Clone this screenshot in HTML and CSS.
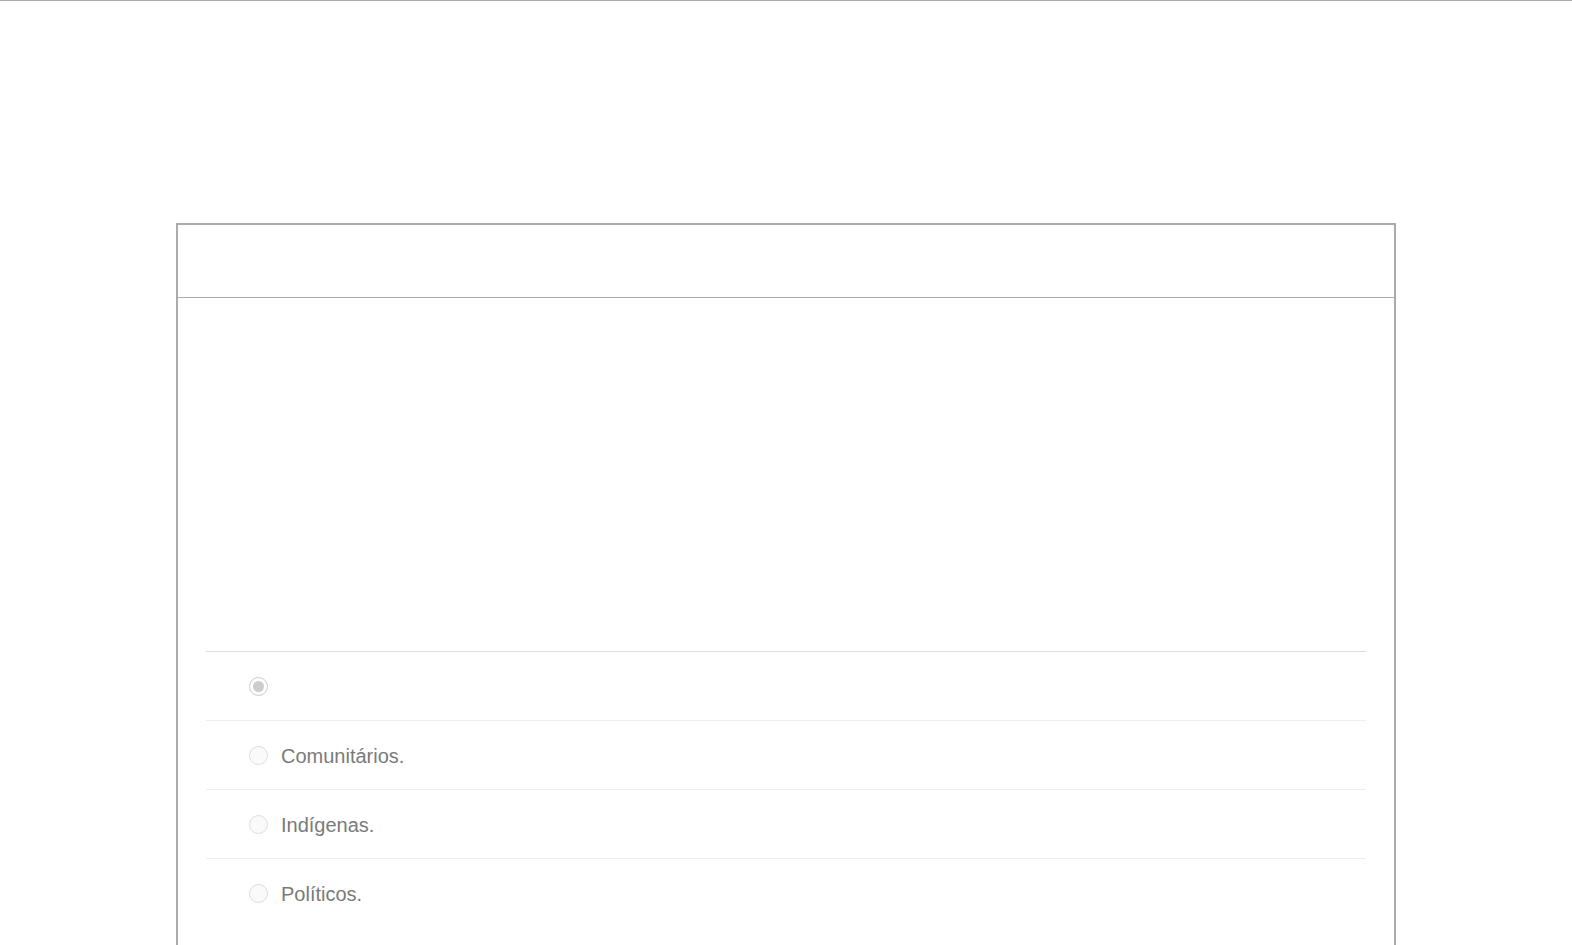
FILE: index.html
```html
<!DOCTYPE html>
<html lang="pt-br">
<head>
    <meta charset="UTF-8">
    <meta name="viewport" content="width=device-width, initial-scale=1.0">
    <title>Questão</title>
    <link rel="stylesheet" href="styles.css">
</head>
<body>
    <div class="topline"></div>

    <main class="page">
        <section class="card">
            <div class="card-header"></div>
            <div class="card-body">
                <div class="question"></div>
                <ul class="options">
                    <li class="option">
                        <input type="radio" name="resposta" class="radio" checked disabled>
                        <span class="option-text"></span>
                    </li>
                    <li class="option">
                        <input type="radio" name="resposta" class="radio" disabled>
                        <span class="option-text">Comunitários.</span>
                    </li>
                    <li class="option">
                        <input type="radio" name="resposta" class="radio" disabled>
                        <span class="option-text">Indígenas.</span>
                    </li>
                    <li class="option">
                        <input type="radio" name="resposta" class="radio" disabled>
                        <span class="option-text">Políticos.</span>
                    </li>
                </ul>
            </div>
        </section>
    </main>
</body>
</html>
```

FILE: styles.css
```css
body {
    margin: 0;
    font-family: "Liberation Sans", Arial, sans-serif;
    background-color: #fff;
    color: #777;
}

.topline {
    height: 1px;
    background-color: #aaa;
}

.page {
    padding-top: 222px;
}

.card {
    width: 1220px;
    margin: 0 auto;
    box-sizing: border-box;
    border: 2px solid #aaa;
    border-bottom: none;
}

.card-header {
    height: 72px;
    border-bottom: 1px solid #aaa;
}

.card-body {
    padding: 0 28px 60px;
}

.question {
    height: 353px;
}

.options {
    list-style: none;
    margin: 0;
    padding: 0;
}

.option {
    display: flex;
    align-items: center;
    height: 68px;
    padding-left: 43px;
    border-top: 1px solid #eee;
}

.option:first-child {
    border-top-color: #ddd;
}

.radio {
    appearance: none;
    -webkit-appearance: none;
    width: 19px;
    height: 19px;
    margin: 0 13px 0 0;
    border: 1px solid #ddd;
    border-radius: 50%;
    background-color: #fafafa;
    box-sizing: border-box;
    position: relative;
    flex-shrink: 0;
}

.radio:checked {
    border-color: #ccc;
    background-color: #fff;
}

.radio:checked::after {
    content: "";
    position: absolute;
    top: 3px;
    left: 3px;
    width: 11px;
    height: 11px;
    border-radius: 50%;
    background-color: #ccc;
}

.option-text {
    font-size: 20px;
    padding-top: 2px;
    color: #7a7a7a;
}
```
